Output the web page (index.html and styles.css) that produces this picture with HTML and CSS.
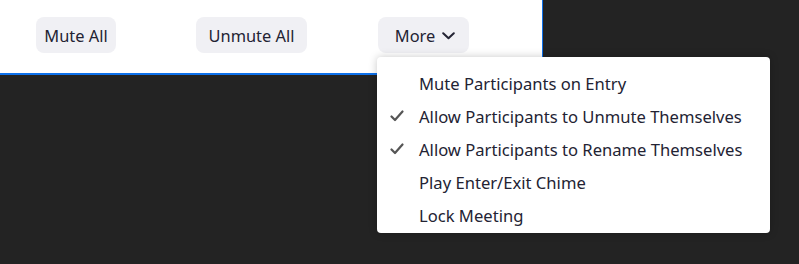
FILE: index.html
```html
<!DOCTYPE html>
<html>
<head>
<meta charset="utf-8">
<link rel="stylesheet" href="styles.css">
</head>
<body>
<div class="panel">
  <div class="toolbar">
    <button class="btn btn-mute">Mute All</button>
    <button class="btn btn-unmute">Unmute All</button>
    <button class="btn btn-more">More
      <svg class="chev" width="13" height="8" viewBox="0 0 13 8"><polyline points="1.2,1.2 6.5,6.3 11.8,1.2" fill="none" stroke="#232333" stroke-width="2" stroke-linecap="round" stroke-linejoin="round"/></svg>
    </button>
  </div>
</div>
<div class="menu">
  <div class="item"><span class="check"></span>Mute Participants on Entry</div>
  <div class="item"><span class="check"><svg width="14" height="12" viewBox="0 0 14 12"><polyline points="1.5,6.5 5,10 12.5,1.5" fill="none" stroke="#555" stroke-width="2.2" stroke-linecap="round" stroke-linejoin="round"/></svg></span>Allow Participants to Unmute Themselves</div>
  <div class="item"><span class="check"><svg width="14" height="12" viewBox="0 0 14 12"><polyline points="1.5,6.5 5,10 12.5,1.5" fill="none" stroke="#555" stroke-width="2.2" stroke-linecap="round" stroke-linejoin="round"/></svg></span>Allow Participants to Rename Themselves</div>
  <div class="item"><span class="check"></span>Play Enter/Exit Chime</div>
  <div class="item"><span class="check"></span>Lock Meeting</div>
</div>
</body>
</html>
```
FILE: styles.css
```css
html, body {
  margin: 0;
  padding: 0;
}
body {
  background: #232323;
  width: 799px;
  height: 264px;
  overflow: hidden;
  position: relative;
  font-family: "Noto Sans", "Open Sans", sans-serif;
  color: #232333;
}
.panel {
  width: 542px;
  height: 73px;
  background: #fff;
  border-right: 1px solid #0e71eb;
  border-bottom: 2px solid #0e71eb;
}
.toolbar {
  display: flex;
  align-items: center;
  padding: 17px 0 0 36px;
  gap: 71px;
}
.btn {
  height: 36px;
  border: none;
  border-radius: 8px;
  background: #f0f0f4;
  font-family: inherit;
  font-size: 16.4px;
  color: #232333;
  padding: 0;
  display: flex;
  align-items: center;
  justify-content: center;
  gap: 7px;
}
.btn-mute {
  width: 80px;
  margin-right: 9px;
}
.btn-unmute {
  width: 111px;
}
.btn-more {
  width: 91px;
  padding-left: 3px;
}
.chev {
  display: block;
  margin-top: 1px;
}
.menu {
  position: absolute;
  left: 377px;
  top: 57px;
  width: 393px;
  box-sizing: border-box;
  padding: 10px 0 1px;
  background: #fff;
  border-radius: 4px;
  box-shadow: 0 0 8px rgba(0, 0, 0, 0.22);
}
.item {
  height: 33px;
  display: flex;
  align-items: center;
  font-size: 16.6px;
  color: #232333;
  white-space: nowrap;
  padding-bottom: 1px;
  box-sizing: border-box;
}
.check {
  width: 42px;
  padding-left: 13px;
  box-sizing: border-box;
  display: flex;
  align-items: center;
}
.check svg {
  display: block;
}
```
